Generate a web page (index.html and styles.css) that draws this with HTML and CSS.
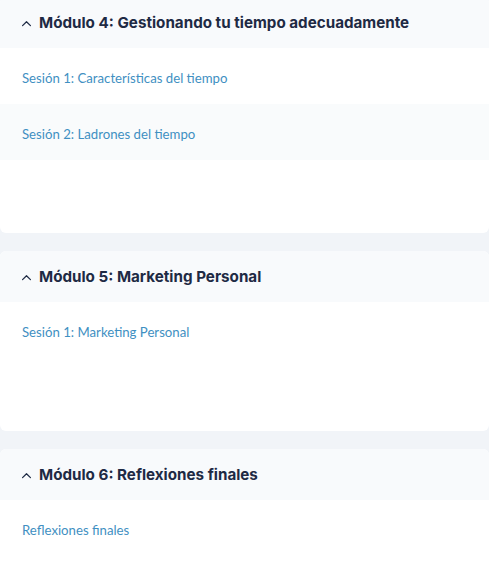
FILE: index.html
```html
<!DOCTYPE html>
<html lang="es">
<head>
<meta charset="utf-8">
<link rel="stylesheet" href="styles.css">
</head>
<body>
<div class="list">
  <section class="module first">
    <div class="module-head">
      <svg class="chev" viewBox="0 0 12 8" width="11" height="7"><path d="M1.5 6.5 L6 2 L10.5 6.5" fill="none" stroke="#1e2a44" stroke-width="1.4" stroke-linecap="round" stroke-linejoin="round"/></svg>
      <h2>Módulo 4: Gestionando tu tiempo adecuadamente</h2>
    </div>
    <ul class="sessions">
      <li>Sesión 1: Características del tiempo</li>
      <li>Sesión 2: Ladrones del tiempo</li>
    </ul>
  </section>
  <section class="module">
    <div class="module-head">
      <svg class="chev" viewBox="0 0 12 8" width="11" height="7"><path d="M1.5 6.5 L6 2 L10.5 6.5" fill="none" stroke="#1e2a44" stroke-width="1.4" stroke-linecap="round" stroke-linejoin="round"/></svg>
      <h2>Módulo 5: Marketing Personal</h2>
    </div>
    <ul class="sessions">
      <li>Sesión 1: Marketing Personal</li>
    </ul>
  </section>
  <section class="module">
    <div class="module-head">
      <svg class="chev" viewBox="0 0 12 8" width="11" height="7"><path d="M1.5 6.5 L6 2 L10.5 6.5" fill="none" stroke="#1e2a44" stroke-width="1.4" stroke-linecap="round" stroke-linejoin="round"/></svg>
      <h2>Módulo 6: Reflexiones finales</h2>
    </div>
    <ul class="sessions">
      <li>Reflexiones finales</li>
    </ul>
  </section>
</div>
</body>
</html>
```

FILE: styles.css
```css
html, body {
  margin: 0;
  padding: 0;
  background: #f1f4f8;
}
body {
  font-family: Inter, "Liberation Sans", sans-serif;
  overflow: hidden;
}
.list {
  display: flex;
  flex-direction: column;
  gap: 18px;
  margin-top: -3px;
}
.module {
  background: #ffffff;
  border-radius: 6px;
  overflow: hidden;
  padding-bottom: 73px;
}
.module-head {
  display: flex;
  align-items: center;
  gap: 7px;
  height: 51px;
  padding: 0 0 0 21px;
  background: #f8fafc;
}
.chev {
  display: block;
  flex: none;
  margin-top: 1px;
}
.module-head h2 {
  margin: 0;
  font-size: 15.2px;
  font-weight: 700;
  color: #1e2a44;
  letter-spacing: 0;
}
.sessions {
  list-style: none;
  margin: 0;
  padding: 0;
}
.sessions li {
  height: 56px;
  box-sizing: border-box;
  padding: 22px 0 0 22px;
  font-family: Lato, "Liberation Sans", sans-serif;
  font-size: 13.2px;
  line-height: 16px;
  color: #3f90c2;
}
.sessions li:nth-child(even) {
  background: #f9fbfc;
}
```
